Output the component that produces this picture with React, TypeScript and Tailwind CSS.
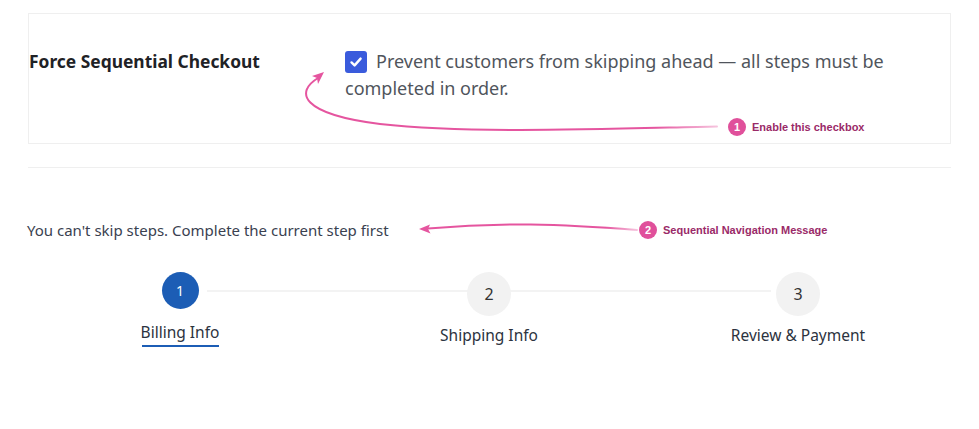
import React from "react";

const sans = { fontFamily: '"Noto Sans", "Open Sans", sans-serif' };

function Annotations() {
  return (
    <svg
      className="pointer-events-none absolute left-0 top-0"
      width={979}
      height={429}
      viewBox="0 0 979 429"
    >
      <defs>
        <linearGradient id="fade1" x1="0" x2="1" y1="0" y2="0">
          <stop offset="0" stopColor="#e5559f" />
          <stop offset="0.85" stopColor="#e5559f" />
          <stop offset="1" stopColor="#e5559f" stopOpacity="0.35" />
        </linearGradient>
      </defs>
      {/* callout 1: badge to checkbox */}
      <path
        d="M717 126.5 C 600 129, 470 134, 380 124 C 300 114, 295 92, 318 78"
        fill="none"
        stroke="url(#fade1)"
        strokeWidth="2"
        strokeLinecap="round"
      />
      <path d="M324 72 L312 76 L317 78 L318 84 Z" fill="#e5559f" />
      {/* callout 2: badge to message */}
      <path
        d="M637 230 C 560 224, 500 222, 428 228.5"
        fill="none"
        stroke="url(#fade1)"
        strokeWidth="2"
        strokeLinecap="round"
      />
      <path d="M419 229 L430 224.5 L428 229 L430.5 233.5 Z" fill="#e5559f" />
    </svg>
  );
}

function Badge({ n, label, className }: { n: number; label: string; className: string }) {
  return (
    <div
      className={`absolute flex items-center gap-[6px] ${className}`}
      style={{ fontFamily: '"Liberation Sans", Arial, sans-serif' }}
    >
      <span className="flex h-[18px] w-[18px] items-center justify-center rounded-full bg-[#e0509b] text-[11px] font-bold text-white">
        {n}
      </span>
      <span className="text-[11px] font-bold text-[#9a2a68]">{label}</span>
    </div>
  );
}

function Step({
  n,
  label,
  active,
}: {
  n: number;
  label: string;
  active?: boolean;
}) {
  return (
    <div className="relative flex w-[140px] flex-col items-center">
      {active ? (
        <>
          <span className="flex h-[37px] w-[37px] items-center justify-center rounded-full bg-[#1c5db5] text-[14px] text-white">
            {n}
          </span>
          <span className="mt-[12px] text-[15.5px] leading-[22px] text-[#2c3340]">{label}</span>
          <span className="mt-[2px] h-[2px] w-[77px] bg-[#1c5db5]" />
        </>
      ) : (
        <>
          <span className="flex h-[44px] w-[44px] items-center justify-center rounded-full bg-[#f2f2f2] text-[16px] text-[#333]">
            {n}
          </span>
          <span className="mt-[8px] text-[15.5px] leading-[22px] text-[#2c3340]">{label}</span>
        </>
      )}
    </div>
  );
}

export default function App() {
  return (
    <div className="relative h-[429px] w-[979px] overflow-hidden bg-white" style={sans}>
      <div className="pl-[28px] pr-[28px] pt-[13px]">
        <div className="flex h-[131px] border border-[#efefef] pt-[34px]">
          <div className="w-[316px] text-[17.4px] font-bold leading-[27px] text-[#1f2226]">
            Force Sequential Checkout
          </div>
          <div className="w-[545px] text-[18px] leading-[27px] text-[#50555c]">
            <span className="mr-[9px] inline-flex h-[22px] w-[22px] translate-y-[1px] items-center justify-center rounded-[3px] bg-[#3a5bdc] align-baseline">
              <svg width="14" height="14" viewBox="0 0 14 14">
                <path
                  d="M2.5 7.4 L5.6 10.4 L11.6 3.6"
                  fill="none"
                  stroke="white"
                  strokeWidth="2.4"
                  strokeLinecap="round"
                  strokeLinejoin="round"
                />
              </svg>
            </span>
            Prevent customers from skipping ahead — all steps must be completed in order.
          </div>
        </div>
        <div className="mt-[23px] h-px bg-[#efefef]" />
        <div className="-ml-px mt-[51px] text-[15px] leading-[22px] text-[#3a4150]">
          You can't skip steps. Complete the current step first
        </div>
        <div className="relative ml-[82px] mt-[31px] flex w-[758px] items-start justify-between">
          <div className="absolute left-[97px] right-[97px] top-[18px] h-[2px] bg-[#f3f3f3]" />
          <Step n={1} label="Billing Info" active />
          <Step n={2} label="Shipping Info" />
          <Step n={3} label="Review & Payment" />
        </div>
      </div>
      <Annotations />
      <Badge n={1} label="Enable this checkbox" className="left-[728px] top-[118px]" />
      <Badge n={2} label="Sequential Navigation Message" className="left-[639px] top-[221px]" />
    </div>
  );
}
